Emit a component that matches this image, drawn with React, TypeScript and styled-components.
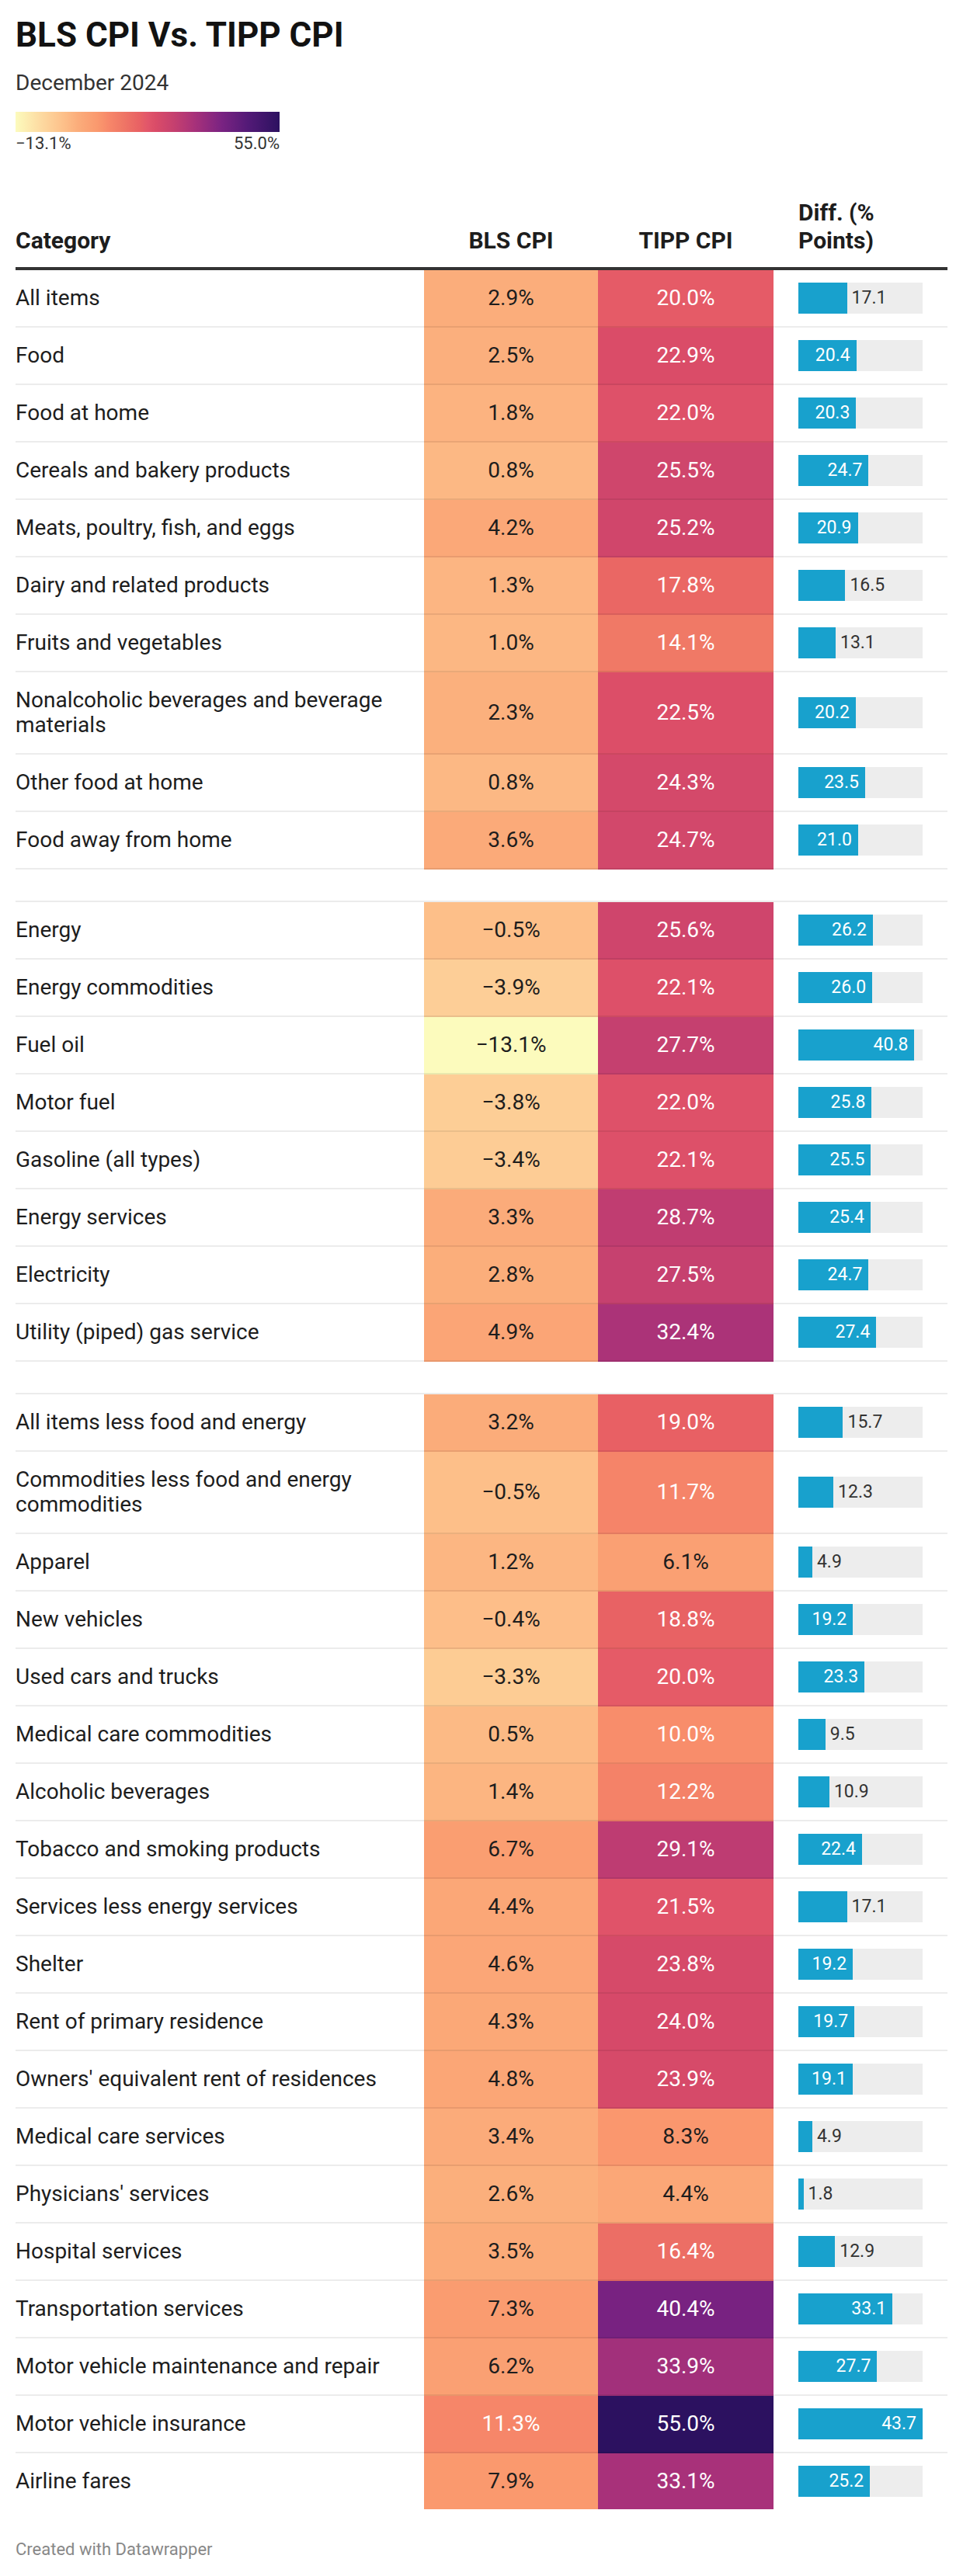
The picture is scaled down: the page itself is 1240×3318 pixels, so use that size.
import { createGlobalStyle } from "styled-components";
import styled from "styled-components";

const GlobalStyle = createGlobalStyle`
  html, body {
    margin: 0;
    padding: 0;
    background: #ffffff;
  }
  body {
    font-family: Roboto, "Liberation Sans", Arial, sans-serif;
    color: #1d1d1d;
  }
`;

const Page = styled.div`
  width: 1200px;
  padding: 19px 20px 20px;
`;

const Title = styled.h1`
  margin: 0;
  font-size: 44px;
  line-height: 1.2;
  font-weight: 700;
  color: #121212;
`;

const Subtitle = styled.p`
  margin: 18px 0 0;
  font-size: 28px;
  line-height: 1.2;
  color: #333333;
`;

const Legend = styled.div`
  margin-top: 21px;
  width: 340px;
`;

const LegendBar = styled.div<{ $stops: string }>`
  height: 26px;
  background: linear-gradient(to right, ${(p) => p.$stops});
`;

const LegendLabels = styled.div`
  margin-top: 2px;
  display: flex;
  justify-content: space-between;
  font-size: 22px;
  line-height: 1.2;
  color: #333333;
`;

const COLS = "526px 224px 226px 224px";

const Table = styled.div`
  margin-top: 57px;
  display: flex;
  flex-direction: column;
`;

const HeaderRow = styled.div`
  display: grid;
  grid-template-columns: ${COLS};
  align-items: end;
  padding-bottom: 16px;
  border-bottom: 4px solid #333333;
`;

const HeaderCell = styled.div<{ $align: "left" | "center"; $pad?: number }>`
  font-size: 30px;
  line-height: 36px;
  font-weight: 700;
  color: #1d1d1d;
  text-align: ${(p) => p.$align};
  padding-left: ${(p) => p.$pad || 0}px;
  padding-right: ${(p) => (p.$pad ? 20 : 0)}px;
`;

const Row = styled.div`
  display: grid;
  grid-template-columns: ${COLS};
`;

const Spacer = styled.div`
  height: 40px;
  border-bottom: 2px solid rgba(0, 0, 0, 0.075);
`;

const Cell = styled.div<{ $last?: boolean }>`
  display: flex;
  align-items: center;
  padding: 20px 0;
  border-bottom: ${(p) => (p.$last ? "none" : "2px solid rgba(0, 0, 0, 0.075)")};
`;

const CategoryCell = styled(Cell)`
  font-size: 28px;
  line-height: 32px;
  padding-right: 24px;
`;

const HeatCell = styled(Cell)<{ $bg: string; $fg: string }>`
  justify-content: center;
  font-size: 28px;
  line-height: 32px;
  background: ${(p) => p.$bg};
  color: ${(p) => p.$fg};
`;

const BarCell = styled(Cell)`
  padding: 16px 32px;
`;

const BarTrack = styled.div`
  display: flex;
  align-items: center;
  width: 160px;
  height: 40px;
  background: #ededed;
`;

const BarFill = styled.div`
  display: flex;
  align-items: center;
  justify-content: flex-end;
  height: 100%;
  background: #18a1cd;
`;

const BarLabel = styled.span<{ $inside: boolean }>`
  font-size: 23px;
  line-height: 1;
  white-space: nowrap;
  color: ${(p) => (p.$inside ? "#ffffff" : "#333333")};
  padding-right: ${(p) => (p.$inside ? 8 : 0)}px;
  padding-left: ${(p) => (p.$inside ? 0 : 6)}px;
`;

const Footer = styled.div`
  margin-top: 39px;
  font-size: 22px;
  line-height: 1.2;
  color: #888888;
`;

type Item = [string, number, number, number];

const groups: Item[][] = [
  [
    ["All items", 2.9, 20.0, 17.1],
    ["Food", 2.5, 22.9, 20.4],
    ["Food at home", 1.8, 22.0, 20.3],
    ["Cereals and bakery products", 0.8, 25.5, 24.7],
    ["Meats, poultry, fish, and eggs", 4.2, 25.2, 20.9],
    ["Dairy and related products", 1.3, 17.8, 16.5],
    ["Fruits and vegetables", 1.0, 14.1, 13.1],
    ["Nonalcoholic beverages and beverage materials", 2.3, 22.5, 20.2],
    ["Other food at home", 0.8, 24.3, 23.5],
    ["Food away from home", 3.6, 24.7, 21.0],
  ],
  [
    ["Energy", -0.5, 25.6, 26.2],
    ["Energy commodities", -3.9, 22.1, 26.0],
    ["Fuel oil", -13.1, 27.7, 40.8],
    ["Motor fuel", -3.8, 22.0, 25.8],
    ["Gasoline (all types)", -3.4, 22.1, 25.5],
    ["Energy services", 3.3, 28.7, 25.4],
    ["Electricity", 2.8, 27.5, 24.7],
    ["Utility (piped) gas service", 4.9, 32.4, 27.4],
  ],
  [
    ["All items less food and energy", 3.2, 19.0, 15.7],
    ["Commodities less food and energy commodities", -0.5, 11.7, 12.3],
    ["Apparel", 1.2, 6.1, 4.9],
    ["New vehicles", -0.4, 18.8, 19.2],
    ["Used cars and trucks", -3.3, 20.0, 23.3],
    ["Medical care commodities", 0.5, 10.0, 9.5],
    ["Alcoholic beverages", 1.4, 12.2, 10.9],
    ["Tobacco and smoking products", 6.7, 29.1, 22.4],
    ["Services less energy services", 4.4, 21.5, 17.1],
    ["Shelter", 4.6, 23.8, 19.2],
    ["Rent of primary residence", 4.3, 24.0, 19.7],
    ["Owners' equivalent rent of residences", 4.8, 23.9, 19.1],
    ["Medical care services", 3.4, 8.3, 4.9],
    ["Physicians' services", 2.6, 4.4, 1.8],
    ["Hospital services", 3.5, 16.4, 12.9],
    ["Transportation services", 7.3, 40.4, 33.1],
    ["Motor vehicle maintenance and repair", 6.2, 33.9, 27.7],
    ["Motor vehicle insurance", 11.3, 55.0, 43.7],
    ["Airline fares", 7.9, 33.1, 25.2],
  ],
];

const MIN = -13.1;
const MAX = 55.0;
const BAR_MAX = 43.7;

// colour ramp read off the legend
const stops: [number, string][] = [
  [0, "#fcfbbd"],
  [0.1, "#fdd9a0"],
  [0.185, "#fdbf89"],
  [0.235, "#fbad7b"],
  [0.31, "#fa996e"],
  [0.36, "#f68569"],
  [0.4, "#f07966"],
  [0.47, "#e86164"],
  [0.5, "#e2566a"],
  [0.53, "#da4c68"],
  [0.6, "#c5406f"],
  [0.68, "#a7317a"],
  [0.78, "#7a2382"],
  [0.88, "#531a77"],
  [1, "#2c1160"],
];

const gradientStops = stops.map(([t, c]) => `${c} ${t * 100}%`).join(", ");

const hex = (c: string) => [1, 3, 5].map((i) => parseInt(c.slice(i, i + 2), 16));

function heat(v: number) {
  const t = Math.min(1, Math.max(0, (v - MIN) / (MAX - MIN)));
  for (let i = 1; i < stops.length; i++) {
    const [t1, c1] = stops[i];
    const [t0, c0] = stops[i - 1];
    if (t <= t1) {
      const k = (t - t0) / (t1 - t0);
      const a = hex(c0);
      const b = hex(c1);
      const rgb = a.map((x, j) => Math.round(x + (b[j] - x) * k));
      return `rgb(${rgb.join(",")})`;
    }
  }
  return stops[stops.length - 1][1];
}

const pct = (v: number) => `${v < 0 ? "\u2212" : ""}${Math.abs(v).toFixed(1)}%`;

function DataRow({ item, last }: { item: Item; last: boolean }) {
  const [name, bls, tipp, diff] = item;
  const width = (diff / BAR_MAX) * 160;
  const inside = diff >= 18;
  return (
    <Row>
      <CategoryCell $last={last}>{name}</CategoryCell>
      <HeatCell $last={last} $bg={heat(bls)} $fg={bls >= 9.5 ? "#ffffff" : "#1d1d1d"}>
        {pct(bls)}
      </HeatCell>
      <HeatCell $last={last} $bg={heat(tipp)} $fg={tipp >= 9.5 ? "#ffffff" : "#1d1d1d"}>
        {pct(tipp)}
      </HeatCell>
      <BarCell $last={last}>
        <BarTrack>
          <BarFill style={{ width: `${width}px` }}>
            {inside && <BarLabel $inside>{diff.toFixed(1)}</BarLabel>}
          </BarFill>
          {!inside && <BarLabel $inside={false}>{diff.toFixed(1)}</BarLabel>}
        </BarTrack>
      </BarCell>
    </Row>
  );
}

export default function App() {
  return (
    <Page>
      <GlobalStyle />
      <Title>BLS CPI Vs. TIPP CPI</Title>
      <Subtitle>December 2024</Subtitle>
      <Legend>
        <LegendBar $stops={gradientStops} />
        <LegendLabels>
          <span>{"\u2212"}13.1%</span>
          <span>55.0%</span>
        </LegendLabels>
      </Legend>
      <Table>
        <HeaderRow>
          <HeaderCell $align="left">Category</HeaderCell>
          <HeaderCell $align="center">BLS CPI</HeaderCell>
          <HeaderCell $align="center">TIPP CPI</HeaderCell>
          <HeaderCell $align="left" $pad={32}>
            Diff. (% Points)
          </HeaderCell>
        </HeaderRow>
        {groups.map((g, gi) => (
          <div key={gi}>
            {gi > 0 && <Spacer />}
            {g.map((item, i) => (
              <DataRow
                key={item[0]}
                item={item}
                last={gi === groups.length - 1 && i === g.length - 1}
              />
            ))}
          </div>
        ))}
      </Table>
      <Footer>Created with Datawrapper</Footer>
    </Page>
  );
}
